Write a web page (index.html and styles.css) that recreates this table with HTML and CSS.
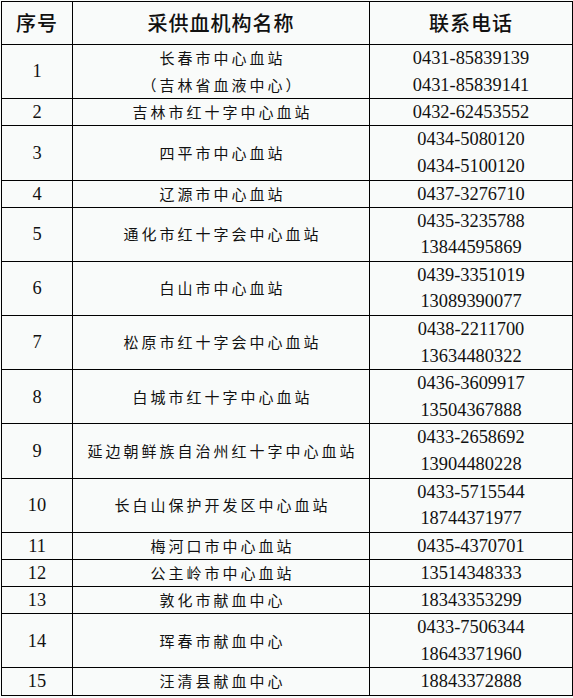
FILE: index.html
```html
<!DOCTYPE html>
<html lang="zh">
<head>
<meta charset="utf-8">
<title>采供血机构</title>
<link rel="stylesheet" href="styles.css">
</head>
<body>
<table class="grid">
  <colgroup>
    <col class="c-no">
    <col class="c-name">
    <col class="c-tel">
  </colgroup>
  <thead>
    <tr><th>序号</th><th>采供血机构名称</th><th>联系电话</th></tr>
  </thead>
  <tbody>
    <tr class="two"><td class="num">1</td><td class="name">长春市中心血站<br>（吉林省血液中心）</td><td class="num">0431-85839139<br>0431-85839141</td></tr>
    <tr><td class="num">2</td><td class="name">吉林市红十字中心血站</td><td class="num">0432-62453552</td></tr>
    <tr class="two"><td class="num">3</td><td class="name">四平市中心血站</td><td class="num">0434-5080120<br>0434-5100120</td></tr>
    <tr><td class="num">4</td><td class="name">辽源市中心血站</td><td class="num">0437-3276710</td></tr>
    <tr class="two"><td class="num">5</td><td class="name">通化市红十字会中心血站</td><td class="num">0435-3235788<br>13844595869</td></tr>
    <tr class="two"><td class="num">6</td><td class="name">白山市中心血站</td><td class="num">0439-3351019<br>13089390077</td></tr>
    <tr class="two"><td class="num">7</td><td class="name">松原市红十字会中心血站</td><td class="num">0438-2211700<br>13634480322</td></tr>
    <tr class="two"><td class="num">8</td><td class="name">白城市红十字中心血站</td><td class="num">0436-3609917<br>13504367888</td></tr>
    <tr class="two"><td class="num">9</td><td class="name">延边朝鲜族自治州红十字中心血站</td><td class="num">0433-2658692<br>13904480228</td></tr>
    <tr class="two"><td class="num">10</td><td class="name">长白山保护开发区中心血站</td><td class="num">0433-5715544<br>18744371977</td></tr>
    <tr><td class="num">11</td><td class="name">梅河口市中心血站</td><td class="num">0435-4370701</td></tr>
    <tr><td class="num">12</td><td class="name">公主岭市中心血站</td><td class="num">13514348333</td></tr>
    <tr><td class="num">13</td><td class="name">敦化市献血中心</td><td class="num">18343353299</td></tr>
    <tr class="two"><td class="num">14</td><td class="name">珲春市献血中心</td><td class="num">0433-7506344<br>18643371960</td></tr>
    <tr><td class="num">15</td><td class="name">汪清县献血中心</td><td class="num">18843372888</td></tr>
  </tbody>
</table>
</body>
</html>
```
FILE: styles.css
```css
html {
  background: #f9fbfa;
}
body {
  margin: 1px 0 0 1px;
  color: #111;
  font-family: "Noto Sans CJK SC", sans-serif;
}
.grid {
  border-collapse: collapse;
  table-layout: fixed;
  width: 571px;
}
.c-no { width: 71px; }
.c-name { width: 297px; }
.c-tel { width: 203px; }
.grid th,
.grid td {
  border: 1px solid #000;
  padding: 0;
  text-align: center;
  vertical-align: middle;
}
.grid th {
  height: 42px;
  font-size: 20px;
  font-weight: 500;
  letter-spacing: 1px;
  line-height: 42px;
}
.grid td {
  line-height: 26.15px;
}
.grid tr.two td {
  line-height: 26.6px;
}
.grid td.num {
  font-family: "Liberation Serif", serif;
  font-size: 18.4px;
}
.grid td.name {
  font-size: 15px;
  letter-spacing: 3px;
  padding-left: 3px;
}
```
